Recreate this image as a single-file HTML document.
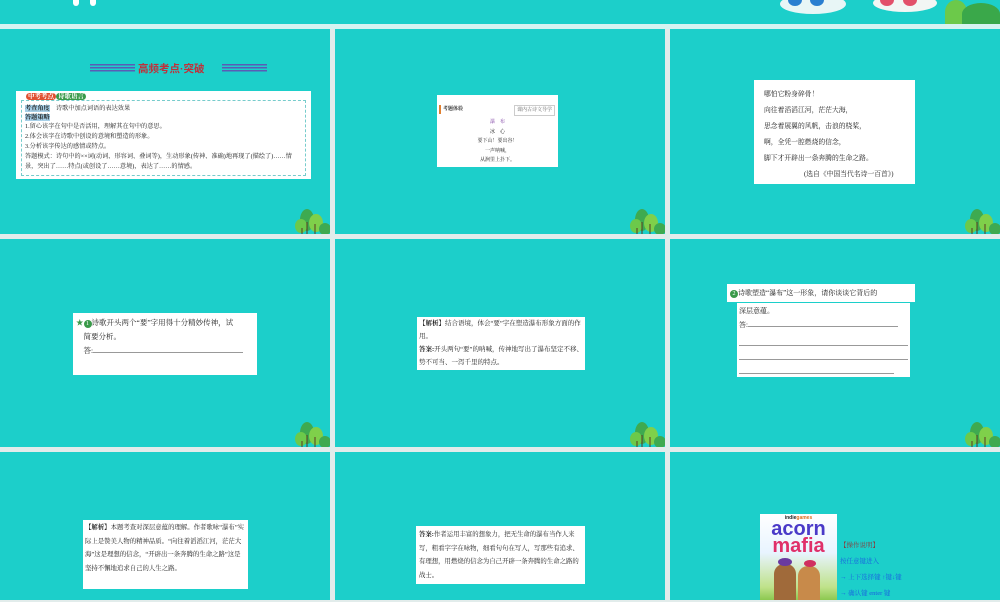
<!DOCTYPE html>
<html><head><meta charset="utf-8"><style>
*{margin:0;padding:0;box-sizing:border-box}
body{width:1000px;height:600px;background:#e2eceb;position:relative;overflow:hidden;font-family:"Liberation Serif","Noto Serif CJK SC",serif;color:#222}
.s{position:absolute;background:#1ccfca;overflow:hidden}
.a{position:absolute}
.box{position:absolute;background:#fff;font-size:7.5px;line-height:1.9}
.tree{position:absolute;width:36px;height:26px}
</style></head><body>
<div class="s" style="left:0;top:0;width:1000px;height:24px">
<div class="a" style="left:73px;top:-4px;width:6px;height:10px;background:#fff;border-radius:0 0 4px 4px"></div>
<div class="a" style="left:90px;top:-4px;width:6px;height:10px;background:#fff;border-radius:0 0 4px 4px"></div>
<div class="a" style="left:780px;top:-6px;width:66px;height:20px;background:#e8f6f6;border-radius:50%"></div>
<div class="a" style="left:788px;top:-6px;width:14px;height:12px;background:#2a7fd0;border-radius:50%"></div>
<div class="a" style="left:810px;top:-6px;width:14px;height:12px;background:#2a7fd0;border-radius:50%"></div>
<div class="a" style="left:873px;top:-6px;width:64px;height:18px;background:#f2f6f4;border-radius:50%"></div>
<div class="a" style="left:880px;top:-6px;width:14px;height:12px;background:#e2506a;border-radius:50%"></div>
<div class="a" style="left:903px;top:-6px;width:14px;height:12px;background:#e2506a;border-radius:50%"></div>
<div class="a" style="left:945px;top:0;width:22px;height:24px;background:#6cc94a;border-radius:50% 50% 0 0"></div>
<div class="a" style="left:962px;top:3px;width:38px;height:22px;background:#3aa84a;border-radius:50% 50% 0 0"></div>
</div>
<div style="position:absolute;left:0;top:24px;width:1000px;height:5px;background:#d6f3f1"></div>

<!-- grid -->
<div class="s" style="left:0;top:29px;width:330px;height:205px"></div>
<div class="s" style="left:335px;top:29px;width:330px;height:205px"></div>
<div class="s" style="left:670px;top:29px;width:330px;height:205px"></div>
<div class="s" style="left:0;top:239px;width:330px;height:208px"></div>
<div class="s" style="left:335px;top:239px;width:330px;height:208px"></div>
<div class="s" style="left:670px;top:239px;width:330px;height:208px"></div>
<div class="s" style="left:0;top:452px;width:330px;height:148px"></div>
<div class="s" style="left:335px;top:452px;width:330px;height:148px"></div>
<div class="s" style="left:670px;top:452px;width:330px;height:148px"></div>

<!-- trees -->
<svg class="tree" style="left:294px;top:208px" viewBox="0 0 36 26"><ellipse cx="13" cy="12" rx="7" ry="11" fill="#3eaa50"/><ellipse cx="22" cy="15" rx="7" ry="9" fill="#7fd04a"/><ellipse cx="7" cy="18" rx="6" ry="7" fill="#6cc94a"/><ellipse cx="31" cy="21" rx="6" ry="6" fill="#3eaa50"/><path d="M13 14v12M21 16v10M8 20v6" stroke="#5a3a20" stroke-width="1"/></svg>
<svg class="tree" style="left:629px;top:208px" viewBox="0 0 36 26"><ellipse cx="13" cy="12" rx="7" ry="11" fill="#3eaa50"/><ellipse cx="22" cy="15" rx="7" ry="9" fill="#7fd04a"/><ellipse cx="7" cy="18" rx="6" ry="7" fill="#6cc94a"/><ellipse cx="31" cy="21" rx="6" ry="6" fill="#3eaa50"/><path d="M13 14v12M21 16v10M8 20v6" stroke="#5a3a20" stroke-width="1"/></svg>
<svg class="tree" style="left:964px;top:208px" viewBox="0 0 36 26"><ellipse cx="13" cy="12" rx="7" ry="11" fill="#3eaa50"/><ellipse cx="22" cy="15" rx="7" ry="9" fill="#7fd04a"/><ellipse cx="7" cy="18" rx="6" ry="7" fill="#6cc94a"/><ellipse cx="31" cy="21" rx="6" ry="6" fill="#3eaa50"/><path d="M13 14v12M21 16v10M8 20v6" stroke="#5a3a20" stroke-width="1"/></svg>
<svg class="tree" style="left:294px;top:421px" viewBox="0 0 36 26"><ellipse cx="13" cy="12" rx="7" ry="11" fill="#3eaa50"/><ellipse cx="22" cy="15" rx="7" ry="9" fill="#7fd04a"/><ellipse cx="7" cy="18" rx="6" ry="7" fill="#6cc94a"/><ellipse cx="31" cy="21" rx="6" ry="6" fill="#3eaa50"/><path d="M13 14v12M21 16v10M8 20v6" stroke="#5a3a20" stroke-width="1"/></svg>
<svg class="tree" style="left:629px;top:421px" viewBox="0 0 36 26"><ellipse cx="13" cy="12" rx="7" ry="11" fill="#3eaa50"/><ellipse cx="22" cy="15" rx="7" ry="9" fill="#7fd04a"/><ellipse cx="7" cy="18" rx="6" ry="7" fill="#6cc94a"/><ellipse cx="31" cy="21" rx="6" ry="6" fill="#3eaa50"/><path d="M13 14v12M21 16v10M8 20v6" stroke="#5a3a20" stroke-width="1"/></svg>
<svg class="tree" style="left:964px;top:421px" viewBox="0 0 36 26"><ellipse cx="13" cy="12" rx="7" ry="11" fill="#3eaa50"/><ellipse cx="22" cy="15" rx="7" ry="9" fill="#7fd04a"/><ellipse cx="7" cy="18" rx="6" ry="7" fill="#6cc94a"/><ellipse cx="31" cy="21" rx="6" ry="6" fill="#3eaa50"/><path d="M13 14v12M21 16v10M8 20v6" stroke="#5a3a20" stroke-width="1"/></svg>

<!-- slide 1 -->
<div class="a" style="left:90px;top:64px;width:45px;height:9px;background:repeating-linear-gradient(#6a3fb0 0 1.5px,transparent 1.5px 3px);opacity:.8"></div>
<div class="a" style="left:138px;top:61px;font-size:10.5px;font-weight:bold;color:#c0303a;font-family:'Liberation Sans','Noto Sans CJK SC',sans-serif">高频考点·突破</div>
<div class="a" style="left:222px;top:64px;width:45px;height:9px;background:repeating-linear-gradient(#6a3fb0 0 1.5px,transparent 1.5px 3px);opacity:.8"></div>
<div class="box" style="left:16px;top:91px;width:295px;height:88px;font-size:6.2px;line-height:10px;padding:5px 5px">
<div style="border:1px dashed #7cc;height:76px;padding:0 3px;margin-top:4px;position:relative">
<div style="position:absolute;top:-9px;left:4px;font-size:6.5px;font-weight:bold;color:#fff"><span style="background:#e05030;border-radius:4px;padding:0 2px">中考考点</span><span style="background:#3a9a4a;border-radius:4px;padding:0 2px">诗歌语言</span></div>
<div style="margin-top:3px"><b style="background:#a8d0e8">考查角度</b>　诗歌中加点词语的表达效果</div>
<div style="margin-top:-1px"><b style="background:#a8d0e8">答题策略</b></div>
<div style="margin-top:-1px">1.留心该字在句中是否活用，理解其在句中的意思。<br>2.体会该字在诗歌中创设的意境和塑造的形象。<br>3.分析该字传达的感情或特点。<br>答题模式：诗句中的××词(动词、形容词、叠词等)，生动形象(传神、准确)地再现了(描绘了)……情景，突出了……特点(或创设了……意境)，表达了……的情感。</div>
</div></div>

<!-- slide 2 -->
<div class="box" style="left:437px;top:95px;width:121px;height:72px;font-size:5px;line-height:9px">
<div style="position:absolute;left:2px;top:10px;border-left:2px solid #e08030;padding-left:2px;font-weight:bold">考题体验</div>
<div style="position:absolute;left:77px;top:10px;border:1px solid #ccc;padding:0 2px;color:#666">课内古诗文导学</div>
<div style="position:absolute;left:0;width:100%;top:23px;text-align:center;line-height:9.5px">
<span style="color:#7a3aa0">瀑　布</span><br>冰　心<br>要下山！要出谷！<br>一声呐喊，<br>从涧里上扑下。</div></div>

<!-- slide 3 -->
<div class="box" style="left:754px;top:80px;width:161px;height:104px;font-size:6.8px;line-height:16px;padding:7px 0 0 10px">
哪怕它粉身碎骨！<br>向往着滔滔江河，茫茫大海，<br>思念着展翼的风帆，击浪的桡桨，<br>啊，全凭一腔燃烧的信念，<br>脚下才开辟出一条奔腾的生命之路。<br><span style="padding-left:40px">(选自《中国当代名诗一百首》)</span></div>

<!-- row 2 -->
<div class="box" style="left:73px;top:313px;width:184px;height:62px;font-size:7.5px;line-height:14px;padding:3px 3px">
<span style="color:#3a9a4a">★</span><span style="display:inline-block;width:8px;height:8px;border-radius:50%;background:#3a9a4a;color:#fff;font-size:6px;line-height:8px;text-align:center">1</span>诗歌开头两个“要”字用得十分精妙传神，试<br>　简要分析。<br>　答:<span style="display:inline-block;width:150px;border-bottom:1px solid #999"></span></div>
<div class="box" style="left:417px;top:317px;width:168px;height:53px;font-size:6.5px;line-height:13px;padding:0 2px">
<b>【解析】</b>结合语境，体会“要”字在塑造瀑布形象方面的作用。<br><b>答案:</b>开头两句“要”的呐喊，传神地写出了瀑布坚定不移、势不可当、一泻千里的特点。</div>
<div class="box" style="left:727px;top:284px;width:188px;height:18px;font-size:7px;line-height:18px;padding-left:3px">
<span style="display:inline-block;width:8px;height:8px;border-radius:50%;background:#3a9a4a;color:#fff;font-size:6px;line-height:8px;text-align:center">2</span>诗歌塑造“瀑布”这一形象，请你谈谈它背后的</div>
<div class="box" style="left:737px;top:303px;width:173px;height:74px;font-size:7px;line-height:14px;padding:1px 2px">
深层意蕴。<br>答:<span style="display:inline-block;width:150px;border-bottom:1px solid #999"></span>
<div style="border-bottom:1px solid #999;height:14px"></div><div style="border-bottom:1px solid #999;height:14px"></div><div style="border-bottom:1px solid #999;height:14px;width:155px"></div></div>

<!-- row 3 -->
<div class="box" style="left:83px;top:520px;width:165px;height:69px;font-size:6.4px;line-height:13.5px;padding:1px 2px">
<b>【解析】</b>本题考查对深层意蕴的理解。作者歌咏“瀑布”实际上是赞美人物的精神品质。“向往着滔滔江河，茫茫大海”这是理想的信念，“开辟出一条奔腾的生命之路”这是坚持不懈地追求自己的人生之路。</div>
<div class="box" style="left:416px;top:526px;width:169px;height:58px;font-size:6.4px;line-height:13.5px;padding:2px 3px">
<b>答案:</b>作者运用丰富的想象力，把无生命的瀑布当作人来写，粗看字字在咏物，细看句句在写人，写那些有追求、有理想，用燃烧的信念为自己开辟一条奔腾的生命之路的战士。</div>
<div class="a" style="left:760px;top:514px;width:77px;height:86px;background:linear-gradient(#fff 0,#e8f4ff 45%,#bfe28a 85%,#8cc850)">
<div style="font-size:5px;text-align:center;font-weight:bold;font-family:'Liberation Sans',sans-serif;margin-top:1px">indie<span style="color:#e07020">games</span></div>
<div style="font-size:20px;line-height:17px;text-align:center;color:#4a3ac8;font-weight:bold;font-family:'Liberation Sans',sans-serif">acorn</div>
<div style="font-size:20px;line-height:17px;text-align:center;color:#e0306a;font-weight:bold;font-family:'Liberation Sans',sans-serif">mafia</div>
<div style="position:absolute;left:14px;top:50px;width:22px;height:36px;background:#a06a3a;border-radius:10px 10px 0 0"></div>
<div style="position:absolute;left:38px;top:52px;width:22px;height:34px;background:#c88a4a;border-radius:10px 10px 0 0"></div>
<div style="position:absolute;left:18px;top:44px;width:14px;height:8px;background:#6a3aa0;border-radius:50%"></div>
<div style="position:absolute;left:44px;top:46px;width:12px;height:7px;background:#d03060;border-radius:50%"></div>
</div>
<div class="a" style="left:840px;top:538px;font-size:6.5px;line-height:16px;color:#1a60e0">
<span style="color:#8a3a3a">【操作说明】</span><br>按任意键进入<br>→ 上下选择键 ↑键↓键<br>→ 确认键 enter 键</div>
</body></html>
